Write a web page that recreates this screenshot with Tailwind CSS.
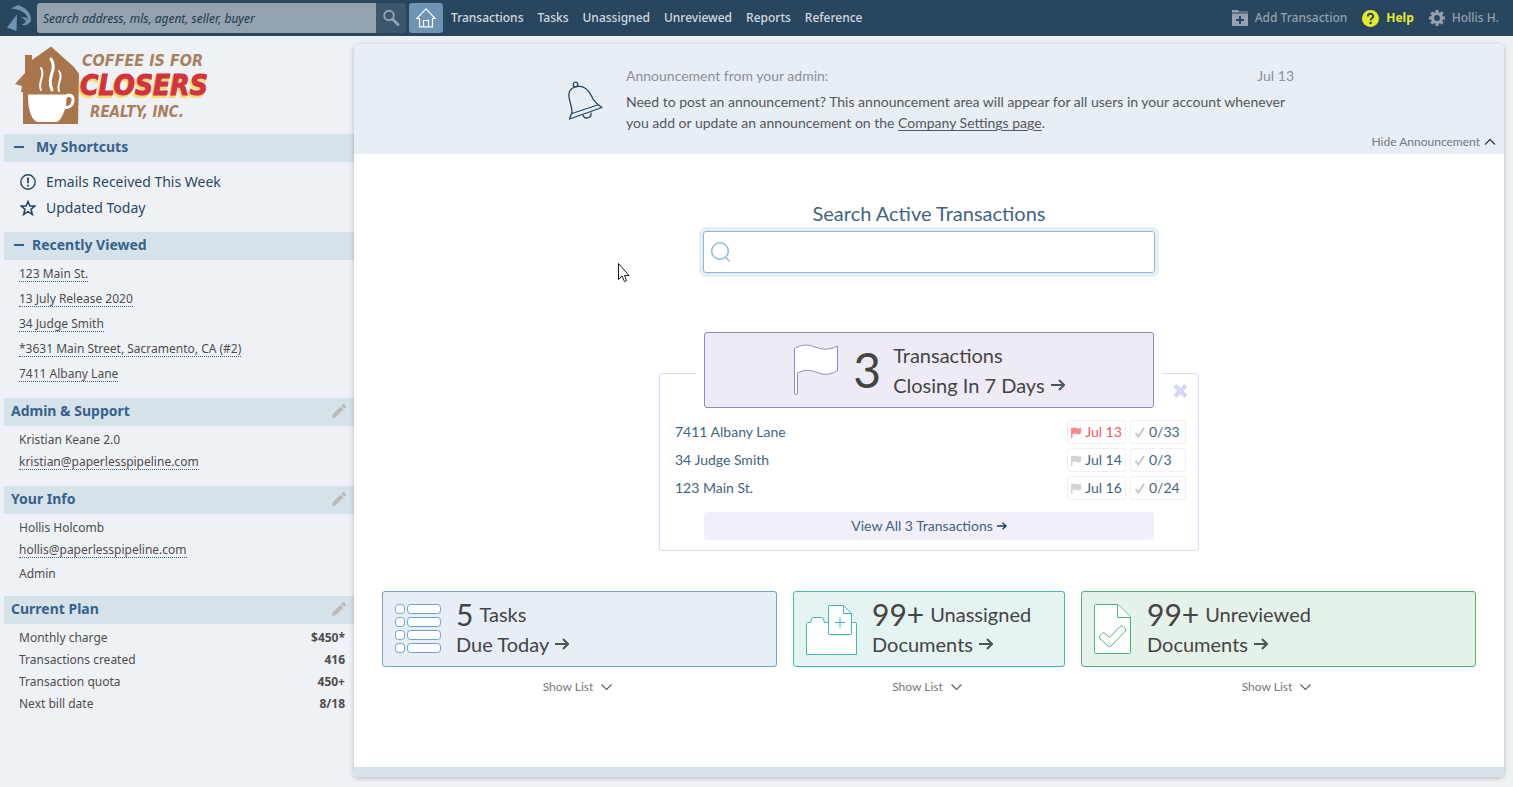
<!DOCTYPE html>
<html lang="en">
<head>
<meta charset="utf-8">
<title>Dashboard</title>
<script src="https://cdn.jsdelivr.net/npm/@tailwindcss/browser@4"></script>
</head>
<body class="min-h-screen flex flex-col bg-[#eef2f7] font-['Noto_Sans','Open_Sans',sans-serif] text-xs text-[#4d4d4d]">

<header class="h-9 shrink-0 flex items-center bg-[#28475f] pl-1.5 pr-3.5 text-xs font-medium text-[#d3dae0]">
  <a href="#" aria-label="Pipeline home" class="w-[31px] shrink-0">
    <svg width="26" height="28" viewBox="0 0 26 28" fill="#6e93b3"><path d="M5 4.500 L12 1 C19 3 25 9 25 15 C25 19.500 20 22.500 15 20.500 C18.500 20.500 20.500 18 19 16 C18 14.500 16.500 14 15 14.500 C17 12 21 13 22 16 C22 10 15 5 5 4.500Z"/><path d="M11 10.500 L10.500 27 L1 23.500 Z"/></svg>
  </a>
  <form class="flex shrink-0" onsubmit="return false">
    <input type="text" aria-label="Search" placeholder="Search address, mls, agent, seller, buyer" class="w-[339px] h-[30px] rounded-l-[3px] bg-[#93a2ae] px-1.5 text-xs italic font-normal placeholder:text-[#22384a] outline-none">
    <button aria-label="Search" class="w-[30px] h-[30px] rounded-r-[3px] bg-[#3c566c] flex items-center justify-center">
      <svg width="18" height="18" viewBox="0 0 18 18" fill="none" stroke="#93a2ae"><circle cx="7" cy="6.500" r="4.800" stroke-width="2"/><path d="M10.500 10 L16 15.500" stroke-width="3" stroke-linecap="round"/></svg>
    </button>
  </form>
  <a href="#" aria-label="Home" class="ml-[3px] w-[34px] h-[30px] shrink-0 rounded-[3px] bg-[#6e93b3] flex items-center justify-center">
    <svg width="20" height="20" viewBox="0 0 20 20" fill="none" stroke="#fff" stroke-width="1.200"><path d="M3.500 10.500 H.800 L10 .900 L19.200 10.500 H16.500 V18.900 H3.500 Z"/><path d="M7.500 18.900 V12.500 H12.500 V18.900"/></svg>
  </a>
  <nav class="flex gap-3.5 ml-2 whitespace-nowrap">
    <a href="#">Transactions</a><a href="#">Tasks</a><a href="#">Unassigned</a><a href="#">Unreviewed</a><a href="#">Reports</a><a href="#">Reference</a>
  </nav>
  <div class="ml-auto flex items-center gap-[15px] whitespace-nowrap text-[#93a2ae]">
    <a href="#" class="flex items-center gap-[7px]"><svg width="16" height="16" viewBox="0 0 16 16"><path d="M0 0 H6 L7.500 1.500 H16 V2.500 H0Z M0 3.500 H16 V15 Q16 16 15 16 H1 Q0 16 0 15Z" fill="#93a2ae"/><path d="M8 6 V14 M4 10 H12" stroke="#28475f" stroke-width="2"/></svg>Add Transaction</a>
    <a href="#" class="flex items-center gap-[7px] font-bold text-[#e6ea2c]"><svg width="17" height="17" viewBox="0 0 17 17"><circle cx="8.500" cy="8.500" r="8.500" fill="#e6ea2c"/><path d="M5.800 6.500 C5.800 3 11.200 3 11.200 6.300 C11.200 8.300 8.600 8.200 8.600 10.600" fill="none" stroke="#28475f" stroke-width="2"/><circle cx="8.600" cy="13" r="1.300" fill="#28475f"/></svg>Help</a>
    <a href="#" class="flex items-center gap-[7px]"><svg width="16" height="16" viewBox="0 0 16 16" fill="none" stroke="#93a2ae"><circle cx="8" cy="8" r="4.500" stroke-width="3.200"/><path d="M8 0V3M8 13V16M0 8H3M13 8H16M2.340 2.340L4.500 4.500M11.500 11.500L13.660 13.660M2.340 13.660L4.500 11.500M11.500 4.500L13.660 2.340" stroke-width="3"/></svg>Hollis H.</a>
  </div>
</header>

<div class="grow flex pr-[9px]">
  <aside class="w-[354px] shrink-0 pl-1">
    <div class="h-[98px] pt-2 pl-2.5">
      <svg width="200" height="84" viewBox="14 44 200 84" role="img" aria-label="Coffee is for Closers Realty, Inc.">
        <path d="M23 124 V92 H21 L22 86 L15 84 L25 73 V55 H32 V60 L51 46.500 L74 67 L79 74 L78 124 Z" fill="#a9764b"/>
        <path d="M28 94.500 H66 C66 94 73 92 74.500 98 C75.500 106 70 109 65 109 C62 118 60 120 57 122 H37 C30 118 28 108 28 94.500Z" fill="#fff"/>
        <path d="M66.500 98 C69 96 72 97 71.500 100 C71.500 104 69 106 66 106 Z" fill="#a9764b"/>
        <g fill="none" stroke="#fff" stroke-linecap="round"><path d="M51 59 C58 70 46 76 52 90" stroke-width="3"/><path d="M41 68 C46 76 37 82 41 90" stroke-width="2"/><path d="M59 71 C64 78 56 84 59 91" stroke-width="2"/></g>
        <g font-family="DejaVu Sans Condensed, DejaVu Sans, sans-serif" font-weight="700" font-style="italic">
          <text x="82" y="66" font-size="16" fill="#a9805c">COFFEE IS FOR</text>
          <text x="79" y="97" font-size="28" fill="#f3dc68" stroke="#f3dc68" stroke-width="2">CLOSERS</text>
          <text x="80" y="95" font-size="28" fill="#d2333f" stroke="#d2333f" stroke-width="1">CLOSERS</text>
          <text x="90" y="117" font-size="15" fill="#a9805c">REALTY, INC.</text>
        </g>
      </svg>
    </div>

    <section>
      <h2 class="h-7 bg-[#d6e2e9] flex items-center pl-2.5 pb-0.5 gap-3 text-sm font-bold text-[#35628c]"><span class="w-2.5 h-0.5 bg-[#35628c]"></span>My Shortcuts</h2>
      <ul class="pt-[7px] pb-[11px] pl-4 text-sm text-[#29475f]">
        <li><a href="#" class="h-[26px] flex items-center gap-2.5"><svg width="16" height="16" viewBox="0 0 16 16" fill="none" stroke="#29475f"><circle cx="8" cy="8" r="7.200" stroke-width="1.400"/><path d="M8 3.500V9.200M8 10.800V12.600" stroke-width="1.800"/></svg>Emails Received This Week</a></li>
        <li><a href="#" class="h-[26px] flex items-center gap-2.5"><svg width="16" height="16" viewBox="0 0 16 16" fill="none" stroke="#29475f" stroke-width="1.600"><path d="M8 1.500L9.900 6H14.800L11 9.300L12.400 14.500L8 11.700L3.600 14.500L5 9.300L1.200 6H6.100Z"/></svg>Updated Today</a></li>
      </ul>
    </section>

    <section>
      <h2 class="h-7 bg-[#d6e2e9] flex items-center pl-2.5 pb-0.5 gap-2 text-sm font-bold text-[#35628c]"><span class="w-2.5 h-0.5 bg-[#35628c]"></span>Recently Viewed</h2>
      <ul class="pl-[15px] pt-px pb-3">
        <li class="h-[25px] flex items-center"><a href="#" class="leading-[15px] border-b border-dotted border-[#35628c]">123 Main St.</a></li>
        <li class="h-[25px] flex items-center"><a href="#" class="leading-[15px] border-b border-dotted border-[#35628c]">13 July Release 2020</a></li>
        <li class="h-[25px] flex items-center"><a href="#" class="leading-[15px] border-b border-dotted border-[#35628c]">34 Judge Smith</a></li>
        <li class="h-[25px] flex items-center"><a href="#" class="leading-[15px] border-b border-dotted border-[#35628c]">*3631 Main Street, Sacramento, CA (#2)</a></li>
        <li class="h-[25px] flex items-center"><a href="#" class="leading-[15px] border-b border-dotted border-[#35628c]">7411 Albany Lane</a></li>
      </ul>
    </section>

    <section>
      <div class="h-7 bg-[#d6e2e9] flex items-center justify-between pl-[7px] pr-2 pb-0.5"><h2 class="text-sm font-bold text-[#35628c]">Admin &amp; Support</h2>
        <button aria-label="Edit admin"><svg width="14" height="14" viewBox="0 0 14 14" fill="#b9b9b9"><path d="M0 14L1 10L8.500 2.500L11.500 5.500L4 13Z M9.300 1.700L10.500 .500Q11.500-.300 12.500 .600L13.400 1.500Q14.300 2.500 13.500 3.500L12.300 4.700Z"/></svg></button></div>
      <div class="pl-[15px] pt-[3px] pb-[13px]">
        <p class="h-[22px] flex items-center">Kristian Keane 2.0</p>
        <p class="h-[22px] flex items-center"><a href="#" class="leading-[15px] border-b border-dotted border-[#35628c]">kristian@paperlesspipeline.com</a></p>
      </div>
    </section>

    <section>
      <div class="h-7 bg-[#d6e2e9] flex items-center justify-between pl-[7px] pr-2 pb-0.5"><h2 class="text-sm font-bold text-[#35628c]">Your Info</h2>
        <button aria-label="Edit your info"><svg width="14" height="14" viewBox="0 0 14 14" fill="#b9b9b9"><path d="M0 14L1 10L8.500 2.500L11.500 5.500L4 13Z M9.300 1.700L10.500 .500Q11.500-.300 12.500 .600L13.400 1.500Q14.300 2.500 13.500 3.500L12.300 4.700Z"/></svg></button></div>
      <div class="pl-[15px] pt-[3px] pb-2.5">
        <p class="h-[22px] flex items-center">Hollis Holcomb</p>
        <p class="h-[22px] flex items-center"><a href="#" class="leading-[15px] border-b border-dotted border-[#35628c]">hollis@paperlesspipeline.com</a></p>
        <p class="h-[25px] flex items-center">Admin</p>
      </div>
    </section>

    <section>
      <div class="h-7 bg-[#d6e2e9] flex items-center justify-between pl-[7px] pr-2 pb-0.5"><h2 class="text-sm font-bold text-[#35628c]">Current Plan</h2>
        <button aria-label="Edit plan"><svg width="14" height="14" viewBox="0 0 14 14" fill="#b9b9b9"><path d="M0 14L1 10L8.500 2.500L11.500 5.500L4 13Z M9.300 1.700L10.500 .500Q11.500-.300 12.500 .600L13.400 1.500Q14.300 2.500 13.500 3.500L12.300 4.700Z"/></svg></button></div>
      <dl class="pl-[15px] pr-[9px] pt-[3px]">
        <div class="h-[22px] flex items-center justify-between"><dt>Monthly charge</dt><dd class="font-bold">$450*</dd></div>
        <div class="h-[22px] flex items-center justify-between"><dt>Transactions created</dt><dd class="font-bold">416</dd></div>
        <div class="h-[22px] flex items-center justify-between"><dt>Transaction quota</dt><dd class="font-bold">450+</dd></div>
        <div class="h-[22px] flex items-center justify-between"><dt>Next bill date</dt><dd class="font-bold">8/18</dd></div>
      </dl>
    </section>
  </aside>

  <main class="grow flex flex-col mt-2 mb-2.5 rounded-[5px] overflow-hidden bg-white shadow-[0_1px_5px_rgba(0,0,0,0.25)] font-['Lato',sans-serif]">
    <section class="relative bg-[#e7eef4] h-[110px] flex justify-center pl-0.5 pt-[21px] text-sm leading-[21px]">
      <svg class="mt-3.5 mr-5 shrink-0" width="40" height="44" viewBox="0 0 40 44" fill="none" stroke="#29475f" stroke-width="1.300" stroke-linejoin="round"><circle cx="9.500" cy="5.500" r="2.300"/><path d="M3.500 40 L6 33 C6 26 2 20 3 14.500 C4 9 9 7 14 7.300 C20 7.600 23 12 25.500 17 C27 21 29 24 36 28.500 Z M6 34.500 L33 25.500"/><path d="M17 36 C18 41 26 39.500 25 33.500"/></svg>
      <div class="w-[668px]">
        <div class="flex justify-between text-[#8b9093]"><span>Announcement from your admin:</span><time>Jul 13</time></div>
        <p class="mt-[5px] text-[#54585c]">Need to post an announcement? This announcement area will appear for all users in your account whenever you add or update an announcement on the <a href="#" class="underline underline-offset-2">Company Settings page</a>.</p>
      </div>
      <button class="absolute right-2 bottom-0.5 flex items-center gap-1 text-xs leading-5 text-[#75797c]">Hide Announcement<svg width="12" height="8" viewBox="0 0 12 8" fill="none" stroke="#3c4043" stroke-width="1.300"><path d="M1 6.500L6 1.500L11 6.500"/></svg></button>
    </section>

    <section class="flex flex-col items-center pt-[47px]">
      <label for="active" class="text-xl leading-6 text-[#416580]">Search Active Transactions</label>
      <div class="mt-1.5 w-[452px] h-[42px] flex items-center gap-2 px-[7px] rounded-[3px] border border-[#8fb6d3] ring-4 ring-[#e5eff6]">
        <svg width="20" height="22" viewBox="0 0 20 22" fill="none" stroke="#8fb6d3" stroke-width="1.400"><circle cx="9" cy="10" r="8.300"/><path d="M14.500 16L18.500 20.500"/></svg>
        <input id="active" type="text" class="grow h-full outline-none text-base">
      </div>
    </section>

    <section class="flex flex-col items-center mt-[59px]">
      <a href="#" class="z-10 w-[450px] h-[76px] flex items-center justify-center rounded-[3px] border border-[#9088c4] bg-[#eeebf6] ring-8 ring-white text-xl leading-[30px] text-[#444]">
        <svg width="46" height="52" viewBox="0 0 46 52" fill="#fff" stroke="#9088c4"><path d="M1.500 4.500 C8 .500 15 0 22 3 C30 6 37 6 44.500 2 V26.500 C37 31.500 30 31 23 28 C16 25.500 10 26 4.500 29 V49 Q4.500 50.500 3 50.500 Q1.500 50.500 1.500 49 Z"/></svg>
        <span class="ml-3.5 text-5xl leading-[60px]">3</span>
        <span class="ml-3"><span class="block">Transactions</span><span class="flex items-center gap-1.5">Closing In 7 Days <svg width="14" height="12" viewBox="0 0 14 12" fill="none" stroke="#4a5752" stroke-width="2"><path d="M0 6H12M8 1L13 6L8 11"/></svg></span></span>
      </a>
      <div class="relative -mt-[35px] w-[540px] rounded-[3px] border border-[#d9d8f6] pt-[46px] pb-2.5 pl-[15px] pr-3 text-sm text-[#416580]">
        <button aria-label="Close" class="absolute right-2.5 top-2.5"><svg width="15" height="14" viewBox="0 0 15 14" stroke="#d6d6f8" stroke-width="4.500"><path d="M2 1.500L13 12.500M13 1.500L2 12.500"/></svg></button>
        <ul class="flex flex-col gap-1">
          <li class="h-6 flex items-center gap-1"><a href="#" class="grow">7411 Albany Lane</a>
            <span class="w-[59px] h-6 flex items-center justify-center gap-1 rounded-[3px] border border-[#f0eff7] text-[#e85a5f]"><svg width="10" height="11" viewBox="0 0 10 11" fill="#f58b8b"><path d="M0 1H1.500Q3.500 0 5.500 1Q7.500 2 10 .500V6.500Q7.500 8 5.500 7Q3.500 6 1.500 7V11H0Z"/></svg>Jul 13</span>
            <span class="w-14 h-6 flex items-center pl-1 gap-1 rounded-[3px] border border-[#f0eff7]"><svg width="10" height="11" viewBox="0 0 10 11" fill="none" stroke="#c9c9c9" stroke-width="2"><path d="M.500 6L3.500 9.500L9 1"/></svg>0/33</span></li>
          <li class="h-6 flex items-center gap-1"><a href="#" class="grow">34 Judge Smith</a>
            <span class="w-[59px] h-6 flex items-center justify-center gap-1 rounded-[3px] border border-[#f0eff7]"><svg width="10" height="11" viewBox="0 0 10 11" fill="#d2d2d2"><path d="M0 1H1.500Q3.500 0 5.500 1Q7.500 2 10 .500V6.500Q7.500 8 5.500 7Q3.500 6 1.500 7V11H0Z"/></svg>Jul 14</span>
            <span class="w-14 h-6 flex items-center pl-1 gap-1 rounded-[3px] border border-[#f0eff7]"><svg width="10" height="11" viewBox="0 0 10 11" fill="none" stroke="#c9c9c9" stroke-width="2"><path d="M.500 6L3.500 9.500L9 1"/></svg>0/3</span></li>
          <li class="h-6 flex items-center gap-1"><a href="#" class="grow">123 Main St.</a>
            <span class="w-[59px] h-6 flex items-center justify-center gap-1 rounded-[3px] border border-[#f0eff7]"><svg width="10" height="11" viewBox="0 0 10 11" fill="#d2d2d2"><path d="M0 1H1.500Q3.500 0 5.500 1Q7.500 2 10 .500V6.500Q7.500 8 5.500 7Q3.500 6 1.500 7V11H0Z"/></svg>Jul 16</span>
            <span class="w-14 h-6 flex items-center pl-1 gap-1 rounded-[3px] border border-[#f0eff7]"><svg width="10" height="11" viewBox="0 0 10 11" fill="none" stroke="#c9c9c9" stroke-width="2"><path d="M.500 6L3.500 9.500L9 1"/></svg>0/24</span></li>
        </ul>
        <a href="#" class="mt-3 ml-[29px] mr-8 h-7 flex items-center justify-center gap-1 rounded bg-[#f1eff9]">View All 3 Transactions <svg width="10" height="8" viewBox="0 0 10 8" fill="none" stroke="#173f5c" stroke-width="1.400"><path d="M0 4H9M5.500 .800L9 4L5.500 7.200"/></svg></a>
      </div>
    </section>

    <section class="grid grid-cols-[395fr_272fr_395fr] gap-4 px-7 mt-10 text-xl leading-[30px] text-[#444]">
      <div>
        <a href="#" class="h-[76px] flex items-center gap-[15px] pl-3 rounded-[3px] border border-[#6fa0d0] bg-[#e7eef6]">
          <svg width="46" height="50" viewBox="0 0 46 50" fill="#fff" stroke="#6fa0d0"><rect x=".500" y=".500" width="9" height="9" rx="3"/><rect x="12.500" y=".500" width="33" height="9" rx="3"/><rect x=".500" y="13.500" width="9" height="9" rx="3"/><rect x="12.500" y="13.500" width="33" height="9" rx="3"/><rect x=".500" y="26.500" width="9" height="9" rx="3"/><rect x="12.500" y="26.500" width="33" height="9" rx="3"/><rect x=".500" y="39.500" width="9" height="9" rx="3"/><rect x="12.500" y="39.500" width="33" height="9" rx="3"/></svg>
          <span><span class="flex items-center gap-1.5 h-[30px]"><span class="text-3xl leading-[30px]">5</span> Tasks</span><span class="flex items-center gap-1.5">Due Today <svg width="14" height="12" viewBox="0 0 14 12" fill="none" stroke="#4a5752" stroke-width="2"><path d="M0 6H12M8 1L13 6L8 11"/></svg></span></span>
        </a>
        <button class="mt-2.5 w-full flex items-center justify-center gap-2 pr-1 text-xs leading-5 text-[#75797c]">Show List<svg width="11" height="8" viewBox="0 0 11 8" fill="none" stroke="#5c6063" stroke-width="1.200"><path d="M.500 1.500L5.500 6.500L10.500 1.500"/></svg></button>
      </div>
      <div>
        <a href="#" class="h-[76px] flex items-center gap-[15px] pl-3 rounded-[3px] border border-[#3fb8b4] bg-[#e5f3f3]">
          <svg width="51" height="51" viewBox="0 0 51 51" fill="#fff" stroke="#3fb8b4"><path d="M1.500 18.500H4.500L6 14Q6.300 13.500 7 13.500H16Q16.700 13.500 17 14L18.500 18.500H49.500Q50.500 18.500 50.500 19.500V50.500H.500V19.500Q.500 18.500 1.500 18.500Z"/><path d="M23.500 1.500H37.500L45.500 9.500V29.500Q45.500 30.500 44.500 30.500H23.500Q22.500 30.500 22.500 29.500V2.500Q22.500 1.500 23.500 1.500Z"/><path d="M37.500 1.500V9.500H45.500M34 13.500V23.500M29 18.500H39" fill="none"/></svg>
          <span><span class="flex items-center gap-1.5 h-[30px]"><span class="text-3xl leading-[30px]">99+</span> Unassigned</span><span class="flex items-center gap-1.5">Documents <svg width="14" height="12" viewBox="0 0 14 12" fill="none" stroke="#4a5752" stroke-width="2"><path d="M0 6H12M8 1L13 6L8 11"/></svg></span></span>
        </a>
        <button class="mt-2.5 w-full flex items-center justify-center gap-2 pr-1 text-xs leading-5 text-[#75797c]">Show List<svg width="11" height="8" viewBox="0 0 11 8" fill="none" stroke="#5c6063" stroke-width="1.200"><path d="M.500 1.500L5.500 6.500L10.500 1.500"/></svg></button>
      </div>
      <div>
        <a href="#" class="h-[76px] flex items-center gap-[15px] pl-3 rounded-[3px] border border-[#4fb374] bg-[#e5f2e9]">
          <svg width="38" height="50" viewBox="0 0 38 50" fill="#fff" stroke="#4cb774"><path d="M1.500 .500H24L36.500 13V48.500Q36.500 49.500 35.500 49.500H1.500Q.500 49.500 .500 48.500V1.500Q.500 .500 1.500 .500Z"/><path d="M23.500 .500V13.500H36.500"/><path d="M6 31.500L8 29.500Q9.500 28 11 29.500L15.500 33.500L26 22.500Q27.500 21 29 22.500L31 24.500Q32.500 26 31 27.500L17 42Q15.500 43.500 14 42L6 34.500Q4.500 33 6 31.500Z"/></svg>
          <span><span class="flex items-center gap-1.5 h-[30px]"><span class="text-3xl leading-[30px]">99+</span> Unreviewed</span><span class="flex items-center gap-1.5">Documents <svg width="14" height="12" viewBox="0 0 14 12" fill="none" stroke="#4a5752" stroke-width="2"><path d="M0 6H12M8 1L13 6L8 11"/></svg></span></span>
        </a>
        <button class="mt-2.5 w-full flex items-center justify-center gap-2 pr-1 text-xs leading-5 text-[#75797c]">Show List<svg width="11" height="8" viewBox="0 0 11 8" fill="none" stroke="#5c6063" stroke-width="1.200"><path d="M.500 1.500L5.500 6.500L10.500 1.500"/></svg></button>
      </div>
    </section>
    <div class="mt-auto h-2.5 bg-[#d6e2e9]"></div>
  </main>
</div>

<svg class="absolute left-[617px] top-[262px] pointer-events-none" width="14" height="22" viewBox="0 0 14 22" fill="#fff" stroke="#1a1a2a" stroke-width="1"><path d="M1.500 1.500V17.500L5 14L7.500 19.500L9.500 18.500L7.500 13.500H12Z"/></svg>
</body>
</html>
